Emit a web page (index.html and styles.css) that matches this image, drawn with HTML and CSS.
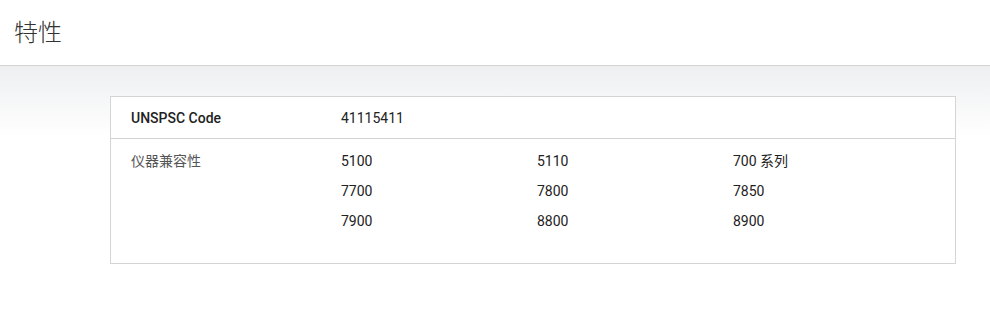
FILE: index.html
```html
<!DOCTYPE html>
<html lang="zh-CN">

<head>
  <meta charset="UTF-8">
  <meta name="viewport" content="width=device-width, initial-scale=1.0">
  <title>特性</title>
  <link rel="stylesheet" href="styles.css">
</head>

<body>
  <!-- 页头 -->
  <div class="pageHead">
    <h1 class="pageTitle">特性</h1>
  </div>

  <!-- 特性表 -->
  <div class="specWrap">
    <div class="specCard">
      <div class="specRow first">
        <div class="specLabel strong">UNSPSC Code</div>
        <div class="specValues">
          <span>41115411</span>
        </div>
      </div>
      <div class="specRow">
        <div class="specLabel">仪器兼容性</div>
        <div class="specValues grid3">
          <span>5100</span>
          <span>5110</span>
          <span>700 系列</span>
          <span>7700</span>
          <span>7800</span>
          <span>7850</span>
          <span>7900</span>
          <span>8800</span>
          <span>8900</span>
        </div>
      </div>
    </div>
  </div>
</body>

</html>
```

FILE: styles.css
```css
body {
  margin: 0;
  background: #fff;
  color: #222;
  font-family: Roboto, "Noto Sans CJK SC", sans-serif;
  font-size: 14px;
}

.pageHead {
  height: 66px;
  border-bottom: 1px solid #d3d3d3;
  box-sizing: border-box;
  padding-left: 14px;
  display: flex;
  align-items: center;
}

.pageTitle {
  margin: 0;
  font-size: 24px;
  font-weight: 300;
  color: #333;
  line-height: 1;
}

.specWrap {
  padding: 30px 34px 60px 110px;
  background: linear-gradient(#eeeff1, #fff 70px);
}

.specCard {
  background: #fff;
  border: 1px solid #d4d4d4;
}

.specRow {
  display: flex;
  padding: 7px 0 27px 20px;
}

.specRow.first {
  padding: 13px 0 11px 20px;
  border-bottom: 1px solid #d4d4d4;
  line-height: 17px;
}

.specLabel {
  width: 210px;
  flex: none;
  color: #555;
  line-height: 30px;
}

.first .specLabel,
.first .specValues {
  line-height: 17px;
}

.specLabel.strong {
  color: #222;
  font-weight: 500;
}

.specValues {
  line-height: 30px;
}

.grid3 {
  display: grid;
  grid-template-columns: repeat(3, 196px);
}
```
